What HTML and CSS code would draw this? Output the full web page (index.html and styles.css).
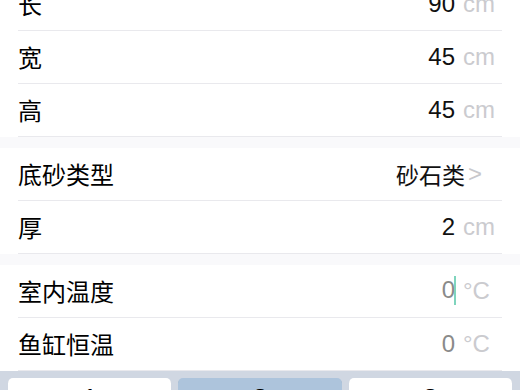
FILE: index.html
```html
<!DOCTYPE html>
<html lang="zh-CN">
<head>
<meta charset="utf-8">
<title>鱼缸参数</title>
<link rel="stylesheet" href="styles.css">
</head>
<body>
<div class="screen">
  <div class="form">
    <section class="group group-first">
      <div class="row"><span class="label">长</span><span class="value">90</span><span class="unit">cm</span></div>
      <div class="row"><span class="label">宽</span><span class="value">45</span><span class="unit">cm</span></div>
      <div class="row"><span class="label">高</span><span class="value">45</span><span class="unit">cm</span></div>
    </section>
    <section class="group">
      <div class="row"><span class="label">底砂类型</span><span class="value value-cjk">砂石类</span><span class="chev">&gt;</span></div>
      <div class="row"><span class="label">厚</span><span class="value">2</span><span class="unit">cm</span></div>
    </section>
    <section class="group">
      <div class="row"><span class="label">室内温度</span><span class="value value-muted">0<span class="caret"></span></span><span class="unit">°C</span></div>
      <div class="row"><span class="label">鱼缸恒温</span><span class="value value-muted">0</span><span class="unit">°C</span></div>
    </section>
  </div>
  <div class="keyboard">
    <div class="key">1</div>
    <div class="key key-active">2</div>
    <div class="key">3</div>
  </div>
</div>
</body>
</html>
```

FILE: styles.css
```css
html, body {
  margin: 0;
  padding: 0;
}

body {
  width: 520px;
  height: 390px;
  overflow: hidden;
  background: #ffffff;
  font-family: "Liberation Sans", "Noto Sans CJK SC", sans-serif;
  color: #000000;
}

.screen {
  display: flex;
  flex-direction: column;
  height: 390px;
}

.form {
  display: flex;
  flex-direction: column;
  background: #f9f9fb;
  margin-top: -22px;
}

.group {
  background: #ffffff;
  padding: 0 18px;
  margin-top: 11px;
}

.group-first {
  margin-top: 0;
}

.row {
  display: flex;
  align-items: center;
  box-sizing: border-box;
  height: 53px;
  border-bottom: 1px solid #e9e9ed;
}

.label {
  flex: 1;
  font-size: 24px;
  font-family: "Noto Sans CJK SC", sans-serif;
  line-height: 30px;
}

.value {
  font-size: 24px;
  line-height: 30px;
  text-align: right;
  margin-right: 8px;
  color: #111111;
}

.value-cjk {
  font-family: "Noto Sans CJK SC", sans-serif;
  font-size: 23px;
  margin-right: 0;
}

.value-muted {
  color: #8a8a8a;
}

.caret {
  display: inline-block;
  width: 2px;
  height: 29px;
  margin: 0 -1px;
  background: #7fd4bd;
  vertical-align: middle;
  position: relative;
  top: -2px;
}

.unit {
  width: 39px;
  font-size: 24px;
  line-height: 30px;
  color: #cbcbcf;
}

.chev {
  font-size: 24px;
  line-height: 30px;
  color: #c8c8cc;
  margin-left: 3px;
  margin-right: 20px;
}

.keyboard {
  flex: 1;
  background: #d0d7e2;
  padding: 7px 8px 0;
  display: grid;
  grid-template-columns: 1fr 1fr 1fr;
  column-gap: 7px;
  align-content: start;
}

.key {
  height: 46px;
  background: #ffffff;
  border-radius: 5px;
  box-shadow: 0 1px 0 #8a8d92;
  text-align: center;
  font-size: 28px;
  line-height: 28px;
  padding-top: 7px;
  box-sizing: border-box;
}

.key-active {
  background: #adc4dc;
}
```
